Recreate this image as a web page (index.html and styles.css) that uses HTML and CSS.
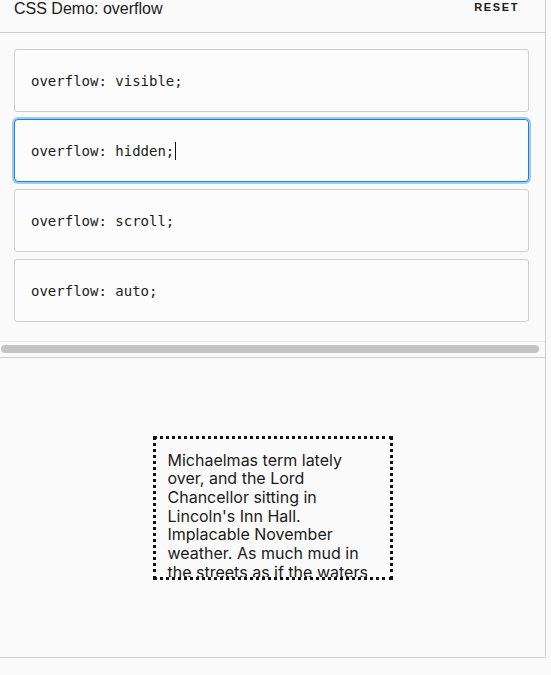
FILE: index.html
```html
<!DOCTYPE html>
<html>
<head>
<meta charset="utf-8">
<link rel="stylesheet" href="styles.css">
</head>
<body>
<div class="panel">
  <header class="header">
    <span class="title">CSS Demo: overflow</span>
    <span class="reset">RESET</span>
  </header>
  <section class="editor">
    <div class="choice"><code>overflow: visible;</code></div>
    <div class="choice active"><code>overflow: hidden;</code><span class="caret"></span></div>
    <div class="choice"><code>overflow: scroll;</code></div>
    <div class="choice"><code>overflow: auto;</code></div>
  </section>
  <div class="hscroll"><div class="thumb"></div></div>
  <section class="output">
    <div class="example">Michaelmas term lately over, and the Lord Chancellor sitting in Lincoln's Inn Hall. Implacable November weather. As much mud in the streets as if the waters had but newly retired from the face of the earth.</div>
  </section>
</div>
</body>
</html>
```

FILE: styles.css
```css
html, body {
  margin: 0;
  padding: 0;
  background: #fafafa;
}
body {
  width: 551px;
  height: 675px;
  overflow: hidden;
}
.panel {
  width: 545px;
  border-right: 1px solid #cdcdcd;
  border-bottom: 1px solid #cdcdcd;
  border-bottom-right-radius: 2px;
  background: #fafafa;
}
.header {
  height: 33px;
  box-sizing: border-box;
  border-bottom: 1px solid #cdcdcd;
  display: flex;
  justify-content: space-between;
  align-items: flex-start;
  padding: 0 26px 0 14px;
}
.title {
  font-family: "Liberation Sans", Arial, sans-serif;
  font-size: 16px;
  line-height: 18px;
  color: #1b1b1b;
  margin-top: 0px;
}
.reset {
  font-family: "Liberation Sans", Arial, sans-serif;
  font-weight: bold;
  font-size: 11px;
  letter-spacing: 1.6px;
  color: #1b1b1b;
  margin-top: 1px;
}
.editor {
  padding: 16px 16px 19px 14px;
  display: flex;
  flex-direction: column;
  gap: 7px;
  border-bottom: 1px solid #e4e4e4;
}
.choice {
  height: 63px;
  box-sizing: border-box;
  border: 1px solid #cfcfcf;
  border-radius: 3px;
  background: #fcfcfc;
  display: flex;
  align-items: center;
  padding-left: 16px;
}
.choice code {
  font-family: "DejaVu Sans Mono", monospace;
  font-size: 14px;
  color: #1b1b1b;
}
.choice.active {
  border-color: #1f80e0;
  box-shadow: 0 0 0 2px #9ccdf7;
  border-radius: 4px;
}
.caret {
  display: inline-block;
  width: 1px;
  height: 18px;
  background: #111;
  margin-left: 1px;
}
.hscroll {
  height: 16px;
  box-sizing: border-box;
  padding: 3px 6px 0 1px;
  border-bottom: 1px solid #cdcdcd;
}
.thumb {
  height: 8px;
  border-radius: 4px;
  background: #c4c4c4;
}
.output {
  height: 299px;
  display: flex;
  align-items: center;
  justify-content: center;
}
.example {
  width: 240px;
  height: 144px;
  box-sizing: border-box;
  border: 3px dotted #111;
  padding: 12px;
  overflow: hidden;
  font-family: Inter, "Noto Sans", sans-serif;
  font-size: 16px;
  line-height: 18.7px;
  color: #1b1b1b;
  text-align: left;
}
```
